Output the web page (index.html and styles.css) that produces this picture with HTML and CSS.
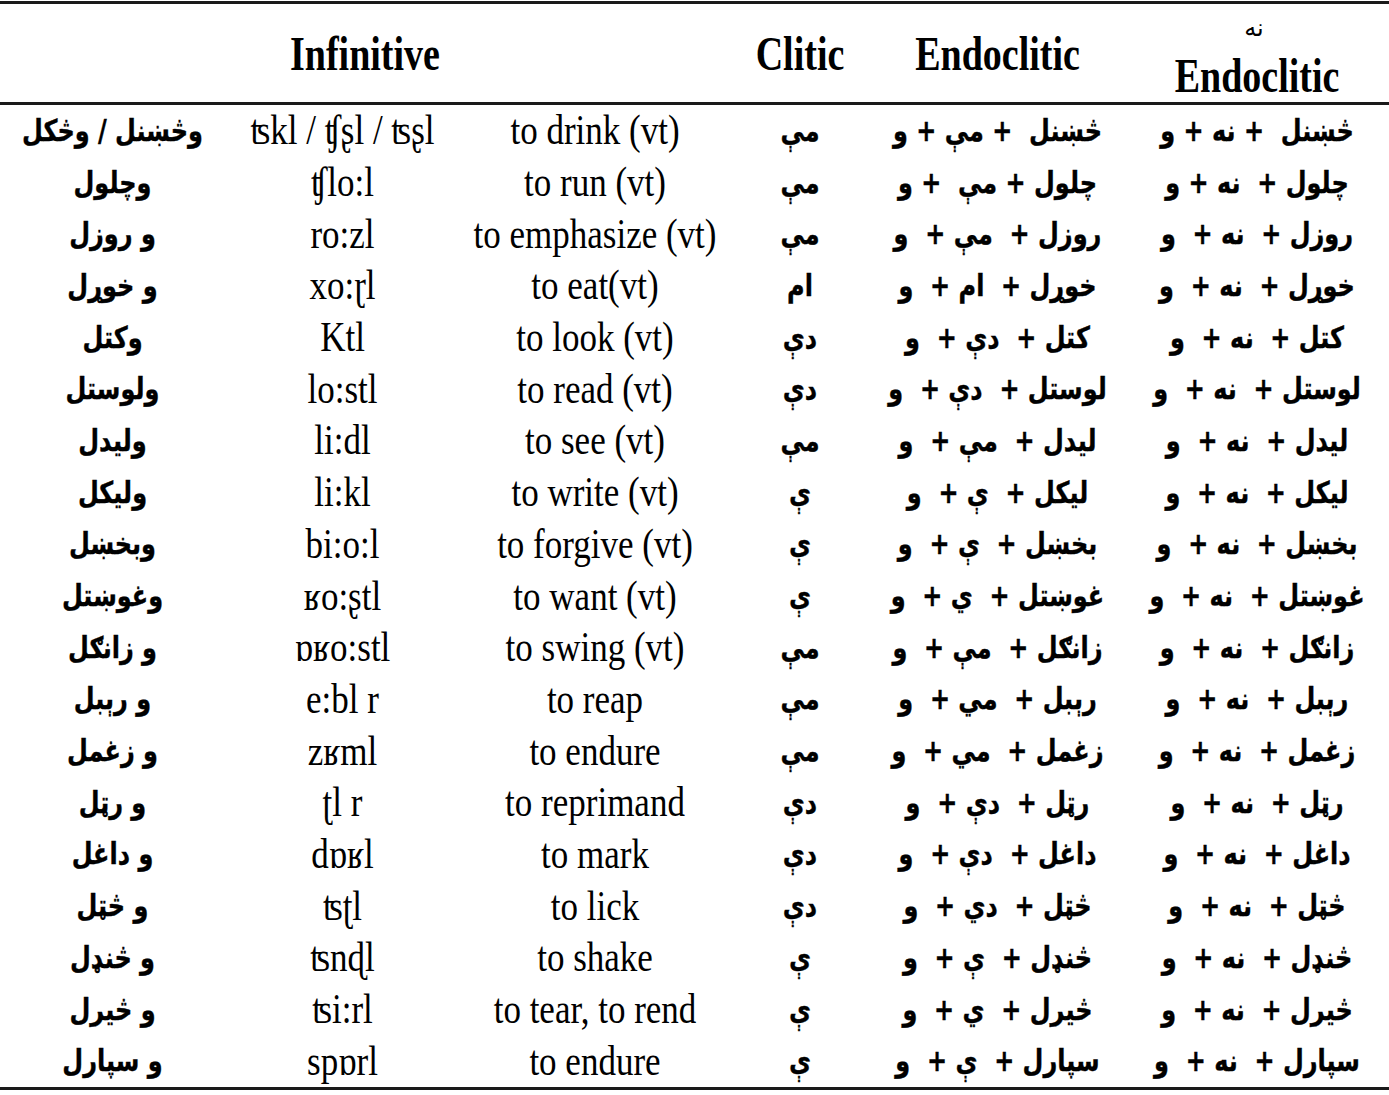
FILE: index.html
```html
<!DOCTYPE html>
<html lang="en">
<head>
<meta charset="utf-8">
<title>Pashto infinitives and endoclitics</title>
<link rel="stylesheet" href="styles.css">
</head>
<body>
<table class="tbl">
  <colgroup>
    <col class="c1"><col class="c2"><col class="c3"><col class="c4"><col class="c5"><col class="c6">
  </colgroup>
  <thead>
    <tr class="head">
      <th colspan="3"><span class="hs">Infinitive</span></th>
      <th><span class="hs">Clitic</span></th>
      <th><span class="hs">Endoclitic</span></th>
      <th class="stack"><span class="na" dir="rtl">نه</span><span class="hs">Endoclitic</span></th>
    </tr>
  </thead>
  <tbody>
    <tr><td class="ps" dir="rtl"><span class="a">وڅښنل / وڅکل</span></td><td class="ipa"><span class="s">ʦkl / ʧʂl / ʦʂl</span></td><td class="en"><span class="s">to drink (vt)</span></td><td class="ps" dir="rtl"><span class="a">مې</span></td><td class="ps" dir="rtl"><span class="a">څښنل&nbsp; + مې + و</span></td><td class="ps" dir="rtl"><span class="a">څښنل&nbsp; + نه + و</span></td></tr>
    <tr><td class="ps" dir="rtl"><span class="a">وچلول</span></td><td class="ipa"><span class="s">ʧlo:l</span></td><td class="en"><span class="s">to run (vt)</span></td><td class="ps" dir="rtl"><span class="a">مې</span></td><td class="ps" dir="rtl"><span class="a">چلول + مې&nbsp; + و</span></td><td class="ps" dir="rtl"><span class="a">چلول +&nbsp; نه + و</span></td></tr>
    <tr><td class="ps" dir="rtl"><span class="a">و روزل</span></td><td class="ipa"><span class="s">ro:zl</span></td><td class="en"><span class="s">to emphasize (vt)</span></td><td class="ps" dir="rtl"><span class="a">مې</span></td><td class="ps" dir="rtl"><span class="a">روزل +&nbsp; مې +&nbsp; و</span></td><td class="ps" dir="rtl"><span class="a">روزل +&nbsp; نه +&nbsp; و</span></td></tr>
    <tr><td class="ps" dir="rtl"><span class="a">و خوړل</span></td><td class="ipa"><span class="s">xo:ɽl</span></td><td class="en"><span class="s">to eat(vt)</span></td><td class="ps" dir="rtl"><span class="a">ام</span></td><td class="ps" dir="rtl"><span class="a">خوړل +&nbsp; ام +&nbsp; و</span></td><td class="ps" dir="rtl"><span class="a">خوړل +&nbsp; نه +&nbsp; و</span></td></tr>
    <tr><td class="ps" dir="rtl"><span class="a">وکتل</span></td><td class="ipa"><span class="s">Ktl</span></td><td class="en"><span class="s">to look (vt)</span></td><td class="ps" dir="rtl"><span class="a">دې</span></td><td class="ps" dir="rtl"><span class="a">کتل +&nbsp; دې +&nbsp; و</span></td><td class="ps" dir="rtl"><span class="a">کتل +&nbsp; نه +&nbsp; و</span></td></tr>
    <tr><td class="ps" dir="rtl"><span class="a">ولوستل</span></td><td class="ipa"><span class="s">lo:stl</span></td><td class="en"><span class="s">to read (vt)</span></td><td class="ps" dir="rtl"><span class="a">دې</span></td><td class="ps" dir="rtl"><span class="a">لوستل +&nbsp; دې +&nbsp; و</span></td><td class="ps" dir="rtl"><span class="a">لوستل +&nbsp; نه +&nbsp; و</span></td></tr>
    <tr><td class="ps" dir="rtl"><span class="a">ولیدل</span></td><td class="ipa"><span class="s">li:dl</span></td><td class="en"><span class="s">to see (vt)</span></td><td class="ps" dir="rtl"><span class="a">مې</span></td><td class="ps" dir="rtl"><span class="a">لیدل +&nbsp; مې +&nbsp; و</span></td><td class="ps" dir="rtl"><span class="a">لیدل +&nbsp; نه +&nbsp; و</span></td></tr>
    <tr><td class="ps" dir="rtl"><span class="a">ولیکل</span></td><td class="ipa"><span class="s">li:kl</span></td><td class="en"><span class="s">to write (vt)</span></td><td class="ps" dir="rtl"><span class="a">ې</span></td><td class="ps" dir="rtl"><span class="a">لیکل +&nbsp; ې +&nbsp; و</span></td><td class="ps" dir="rtl"><span class="a">لیکل +&nbsp; نه +&nbsp; و</span></td></tr>
    <tr><td class="ps" dir="rtl"><span class="a">وبخښل</span></td><td class="ipa"><span class="s">bi:o:l</span></td><td class="en"><span class="s">to forgive (vt)</span></td><td class="ps" dir="rtl"><span class="a">ې</span></td><td class="ps" dir="rtl"><span class="a">بخښل +&nbsp; ې +&nbsp; و</span></td><td class="ps" dir="rtl"><span class="a">بخښل +&nbsp; نه +&nbsp; و</span></td></tr>
    <tr><td class="ps" dir="rtl"><span class="a">وغوښتل</span></td><td class="ipa"><span class="s">ʁo:ʂtl</span></td><td class="en"><span class="s">to want (vt)</span></td><td class="ps" dir="rtl"><span class="a">ې</span></td><td class="ps" dir="rtl"><span class="a">غوښتل +&nbsp; ي +&nbsp; و</span></td><td class="ps" dir="rtl"><span class="a">غوښتل +&nbsp; نه +&nbsp; و</span></td></tr>
    <tr><td class="ps" dir="rtl"><span class="a">و زانګل</span></td><td class="ipa"><span class="s">ɒʁo:stl</span></td><td class="en"><span class="s">to swing (vt)</span></td><td class="ps" dir="rtl"><span class="a">مې</span></td><td class="ps" dir="rtl"><span class="a">زانګل +&nbsp; مې +&nbsp; و</span></td><td class="ps" dir="rtl"><span class="a">زانګل +&nbsp; نه +&nbsp; و</span></td></tr>
    <tr><td class="ps" dir="rtl"><span class="a">و رېبل</span></td><td class="ipa"><span class="s">e:bl r</span></td><td class="en"><span class="s">to reap</span></td><td class="ps" dir="rtl"><span class="a">مې</span></td><td class="ps" dir="rtl"><span class="a">رېبل +&nbsp; مي +&nbsp; و</span></td><td class="ps" dir="rtl"><span class="a">رېبل +&nbsp; نه +&nbsp; و</span></td></tr>
    <tr><td class="ps" dir="rtl"><span class="a">و زغمل</span></td><td class="ipa"><span class="s">zʁml</span></td><td class="en"><span class="s">to endure</span></td><td class="ps" dir="rtl"><span class="a">مې</span></td><td class="ps" dir="rtl"><span class="a">زغمل +&nbsp; مي +&nbsp; و</span></td><td class="ps" dir="rtl"><span class="a">زغمل +&nbsp; نه +&nbsp; و</span></td></tr>
    <tr><td class="ps" dir="rtl"><span class="a">و رټل</span></td><td class="ipa"><span class="s">ʈl r</span></td><td class="en"><span class="s">to reprimand</span></td><td class="ps" dir="rtl"><span class="a">دې</span></td><td class="ps" dir="rtl"><span class="a">رټل +&nbsp; دې +&nbsp; و</span></td><td class="ps" dir="rtl"><span class="a">رټل +&nbsp; نه +&nbsp; و</span></td></tr>
    <tr><td class="ps" dir="rtl"><span class="a">و داغل</span></td><td class="ipa"><span class="s">dɒʁl</span></td><td class="en"><span class="s">to mark</span></td><td class="ps" dir="rtl"><span class="a">دې</span></td><td class="ps" dir="rtl"><span class="a">داغل +&nbsp; دې +&nbsp; و</span></td><td class="ps" dir="rtl"><span class="a">داغل +&nbsp; نه +&nbsp; و</span></td></tr>
    <tr><td class="ps" dir="rtl"><span class="a">و څټل</span></td><td class="ipa"><span class="s">ʦʈl</span></td><td class="en"><span class="s">to lick</span></td><td class="ps" dir="rtl"><span class="a">دې</span></td><td class="ps" dir="rtl"><span class="a">څټل +&nbsp; دي +&nbsp; و</span></td><td class="ps" dir="rtl"><span class="a">څټل +&nbsp; نه +&nbsp; و</span></td></tr>
    <tr><td class="ps" dir="rtl"><span class="a">و څنډل</span></td><td class="ipa"><span class="s">ʦnɖl</span></td><td class="en"><span class="s">to shake</span></td><td class="ps" dir="rtl"><span class="a">ې</span></td><td class="ps" dir="rtl"><span class="a">څنډل +&nbsp; ې +&nbsp; و</span></td><td class="ps" dir="rtl"><span class="a">څنډل +&nbsp; نه +&nbsp; و</span></td></tr>
    <tr><td class="ps" dir="rtl"><span class="a">و څیرل</span></td><td class="ipa"><span class="s">ʦi:rl</span></td><td class="en"><span class="s">to tear, to rend</span></td><td class="ps" dir="rtl"><span class="a">ې</span></td><td class="ps" dir="rtl"><span class="a">څیرل +&nbsp; ي +&nbsp; و</span></td><td class="ps" dir="rtl"><span class="a">څیرل +&nbsp; نه +&nbsp; و</span></td></tr>
    <tr><td class="ps" dir="rtl"><span class="a">و سپارل</span></td><td class="ipa"><span class="s">spɒrl</span></td><td class="en"><span class="s">to endure</span></td><td class="ps" dir="rtl"><span class="a">ې</span></td><td class="ps" dir="rtl"><span class="a">سپارل +&nbsp; ې +&nbsp; و</span></td><td class="ps" dir="rtl"><span class="a">سپارل +&nbsp; نه +&nbsp; و</span></td></tr>
  </tbody>
</table>
</body>
</html>
```

FILE: styles.css
```css
html, body {
  margin: 0;
  padding: 0;
  background: #fff;
}
body {
  padding-top: 1px;
  font-family: "Liberation Serif", "Times New Roman", serif;
  color: #000;
}
.tbl {
  width: 1389px;
  border-collapse: collapse;
  table-layout: fixed;
  border-top: 3px solid #1a1a1a;
  border-bottom: 3px solid #1a1a1a;
}
.c1 { width: 225px; }
.c2 { width: 235px; }
.c3 { width: 270px; }
.c4 { width: 140px; }
.c5 { width: 255px; }
.c6 { width: 264px; }

.head th {
  height: 98px;
  padding: 0;
  font-weight: bold;
  font-size: 38px;
  text-align: center;
  vertical-align: middle;
  border-bottom: 3px solid #1a1a1a;
  line-height: 1;
}
.hs {
  display: inline-block;
  transform: scaleY(1.3);
}
.stack {
  position: relative;
}
.stack .hs {
  margin-top: 44px;
}
.na {
  position: absolute;
  top: 12px;
  left: 0;
  right: 0;
  padding-right: 6px;
  text-align: center;
  font-family: "DejaVu Sans", sans-serif;
  font-weight: normal;
  font-size: 24px;
  line-height: 1;
}

tbody td {
  height: 51.7px;
  padding: 0;
  text-align: center;
  vertical-align: middle;
  white-space: nowrap;
  line-height: 1;
}
.s {
  display: inline-block;
  transform: scaleY(1.2);
  font-size: 35px;
}
.ps {
  font-family: "DejaVu Sans", sans-serif;
  font-weight: bold;
}
.a {
  display: inline-block;
  font-size: 24px;
  transform: scaleY(1.25);
  -webkit-text-stroke: 0.3px #000;
}
```
